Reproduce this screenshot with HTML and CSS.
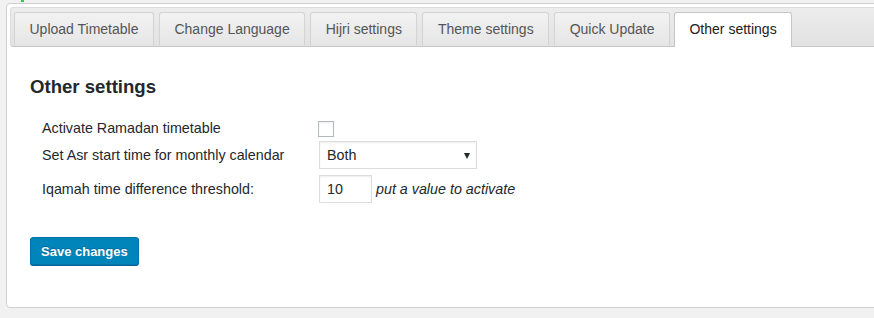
FILE: index.html
```html
<!DOCTYPE html>
<html lang="en">
<head>
    <meta charset="UTF-8">
    <meta name="viewport" content="width=device-width, initial-scale=1.0">
    <title>Other settings</title>
    <link rel="stylesheet" href="styles.css">
</head>
<body>
    <div class="topmark"></div>
    <div class="panel">
        <ul class="tabs">
            <li class="tab">Upload Timetable</li>
            <li class="tab">Change Language</li>
            <li class="tab">Hijri settings</li>
            <li class="tab">Theme settings</li>
            <li class="tab">Quick Update</li>
            <li class="tab active">Other settings</li>
        </ul>

        <div class="content">
            <h3>Other settings</h3>

            <div class="form">
                <div class="row row-check">
                    <label class="row-label">Activate Ramadan timetable</label>
                    <input type="checkbox" class="check">
                </div>

                <div class="row row-select">
                    <label class="row-label">Set Asr start time for monthly calendar</label>
                    <div class="select-wrap">
                        <select class="select">
                            <option>Both</option>
                        </select>
                    </div>
                </div>

                <div class="row">
                    <label class="row-label">Iqamah time difference threshold:</label>
                    <input type="text" class="num" value="10">
                    <span class="hint">put a value to activate</span>
                </div>
            </div>

            <button class="button">Save changes</button>
        </div>
    </div>
</body>
</html>
```

FILE: styles.css
```css
body {
    margin: 0;
    background: #f1f1f1;
    font-family: "Liberation Sans", Arial, sans-serif;
    color: #333;
    overflow: hidden;
}

.topmark {
    width: 3px;
    height: 2px;
    margin-left: 21px;
    background: #2ecc40;
}

.panel {
    margin: 1px -20px 0 6px;
    height: 305px;
    background: #fff;
    border: 1px solid #d0d0d0;
    border-radius: 4px;
    padding: 3px;
    box-sizing: border-box;
}

.tabs {
    list-style: none;
    margin: 0;
    padding: 4px 3px 0;
    display: flex;
    gap: 5px;
    height: 34px;
    border: 1px solid #dcdcdc;
    border-radius: 3px;
    background: linear-gradient(#ececec, #e2e2e2);
    border-bottom-color: #c8c8c8;
}

.tab {
    height: 32px;
    line-height: 32px;
    padding: 0 14.5px;
    font-size: 14px;
    color: #555;
    border: 1px solid #d3d3d3;
    border-bottom: none;
    border-radius: 3px 3px 0 0;
    background: linear-gradient(#f2f2f2, #e6e6e6);
    white-space: nowrap;
}

.tab.active {
    height: 34px;
    color: #212121;
    background: #fff;
    border-color: #c5c5c5;
    margin-left: -1px;
}

.content {
    padding: 0 20px;
}

h3 {
    margin: 29px 0 19px;
    font-size: 18.6px;
    line-height: 22px;
    color: #23282d;
}

.form {
    padding-left: 12px;
    font-size: 14.3px;
    color: #23282d;
}

.row {
    display: flex;
    align-items: center;
    height: 28px;
    margin-bottom: 6px;
}

.row-check {
    height: 21px;
    margin-bottom: 3px;
}

.row-label {
    width: 277px;
    flex-shrink: 0;
}

.check {
    appearance: none;
    width: 16px;
    height: 16px;
    margin: 3px 0 0 -1px;
    border: 1px solid #b4b9be;
    background: #fff;
    box-shadow: inset 0 1px 2px rgba(0,0,0,0.07);
}

.select-wrap {
    position: relative;
}

.select-wrap::after {
    content: "";
    position: absolute;
    right: 7px;
    top: 12px;
    border-left: 3.5px solid transparent;
    border-right: 3.5px solid transparent;
    border-top: 6px solid #23282d;
}

.select {
    appearance: none;
    display: block;
    width: 158px;
    height: 28px;
    padding: 0 7px;
    border: 1px solid #ddd;
    background: #fff;
    font: 14.3px "Liberation Sans", Arial, sans-serif;
    color: #23282d;
    box-shadow: inset 0 1px 2px rgba(0,0,0,0.07);
}

.num {
    width: 53px;
    height: 28px;
    box-sizing: border-box;
    padding: 0 7px;
    border: 1px solid #ddd;
    font: 14.3px "Liberation Sans", Arial, sans-serif;
    color: #23282d;
    box-shadow: inset 0 1px 2px rgba(0,0,0,0.07);
}

.hint {
    margin-left: 4px;
    font-style: italic;
}

.button {
    margin-top: 28px;
    height: 28px;
    padding: 0 10px;
    background: #0085ba;
    border: 1px solid #0073aa;
    border-radius: 3px;
    box-shadow: 0 1px 0 #006799;
    color: #fff;
    font: bold 13px "Liberation Sans", Arial, sans-serif;
    text-shadow: 0 -1px 1px #006799;
}
```
